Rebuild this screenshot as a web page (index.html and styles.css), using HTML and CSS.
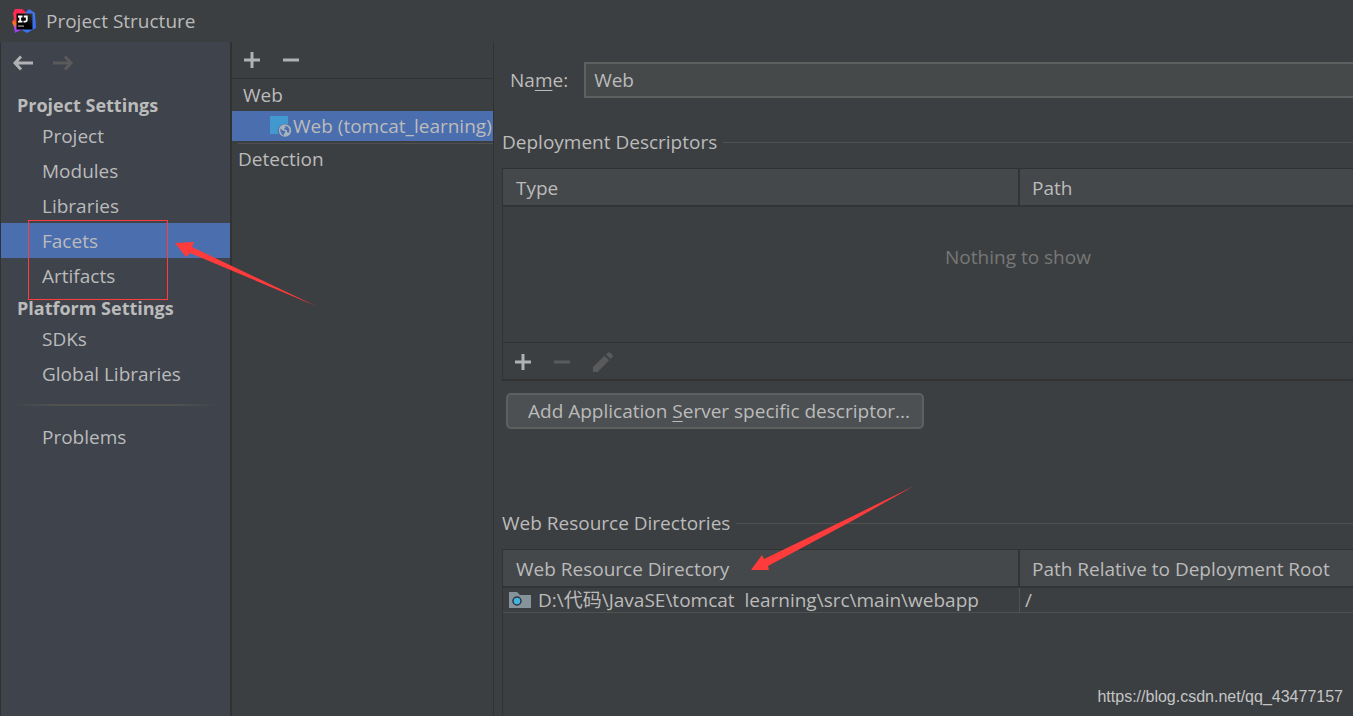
FILE: index.html
```html
<!DOCTYPE html>
<html lang="en">
<head>
<meta charset="utf-8">
<title>Project Structure</title>
<link rel="stylesheet" href="styles.css">
</head>
<body>
<div class="window">
  <header class="titlebar">
    <svg class="logo" width="24" height="24" viewBox="0 0 24 24" aria-hidden="true">
      <defs>
        <linearGradient id="warm" x1="0" y1="0" x2="0" y2="1"><stop offset="0" stop-color="#fe2857"/><stop offset=".45" stop-color="#fc3a4c"/><stop offset=".6" stop-color="#f97a12"/><stop offset=".8" stop-color="#b74af7"/><stop offset="1" stop-color="#8a3bd8"/></linearGradient>
        <linearGradient id="cool" x1="0" y1="0" x2="1" y2="1"><stop offset="0" stop-color="#5a5be0"/><stop offset=".5" stop-color="#3c78ee"/><stop offset="1" stop-color="#2f6bea"/></linearGradient>
        <linearGradient id="plate" x1="1" y1="0" x2="0" y2="1"><stop offset="0" stop-color="#3a3a3a"/><stop offset=".5" stop-color="#000"/></linearGradient>
      </defs>
      <path fill="url(#warm)" d="M3 0 10 0 15 4 14 20 9 21 3 24 2 18 0 13 2 10 1 4z"/>
      <path fill="url(#cool)" d="M17 0 23 4 24 19 15 24 8 20 13 4z"/>
      <path fill="url(#plate)" d="M4.500 4.500h16v16h-16z"/>
      <path fill="none" stroke="#fff" stroke-width="1.800" d="M6 7.500h4.500M8.200 7.500v5M6 12.600h4.500M11.800 7.500h3v3.600q0 1.500-1.500 1.500h-1.800"/>
      <path fill="#aaa" d="M6 16.500h6v1.200H6z"/>
    </svg>
    <h1 class="title">Project Structure</h1>
  </header>

  <div class="panes">
    <nav class="sidebar" aria-label="Settings">
      <div class="history">
        <button class="icon-button" type="button" aria-label="Back">
          <svg width="20" height="16" viewBox="0 0 20 16"><path class="stroke" d="M2 8H20M8 1.500 2 8 8 14.500"/></svg>
        </button>
        <button class="icon-button" type="button" aria-label="Forward" disabled>
          <svg width="20" height="16" viewBox="0 0 20 16"><path class="stroke" d="M18 8H0M12 1.500 18 8 12 14.500"/></svg>
        </button>
      </div>
      <h2 class="group">Project Settings</h2>
      <a class="item" href="#project">Project</a>
      <a class="item" href="#modules">Modules</a>
      <a class="item" href="#libraries">Libraries</a>
      <a class="item selected" href="#facets" aria-current="page">Facets</a>
      <a class="item" href="#artifacts">Artifacts</a>
      <h2 class="group">Platform Settings</h2>
      <a class="item" href="#sdks">SDKs</a>
      <a class="item" href="#global">Global Libraries</a>
      <div class="divider"></div>
      <a class="item" href="#problems">Problems</a>
    </nav>

    <section class="facets" aria-label="Facets">
      <div class="facet-tools">
        <button class="icon-button" type="button" aria-label="Add facet">
          <svg width="16" height="16" viewBox="0 0 16 16"><path class="stroke" d="M8 0V16M0 8H16"/></svg>
        </button>
        <button class="icon-button" type="button" aria-label="Remove facet">
          <svg width="16" height="16" viewBox="0 0 16 16"><path class="stroke" d="M0 8H16"/></svg>
        </button>
      </div>
      <div class="tree-row">Web</div>
      <div class="tree-row child selected">
        <svg class="facet-icon" width="22" height="22" viewBox="0 0 22 22" aria-hidden="true">
          <path fill="#4299cf" d="M0 1h18v8.500a7.200 7.200 0 0 0-9.500 9.500H0z"/>
          <circle cx="15" cy="15.500" r="6.200" fill="#a7b2ba"/>
          <path fill="#4b6eaf" d="M10.500 13.500l2.500 2.200 2.200.3-.2 1.700-1.300 1 .3 2.200-2.400-1.900-1.300-3zM14.500 10.800l3.300 1 1.700 2.700-.6 3.300-1.700-.6-.4-2.200-2.500-.4.300-1.700 1.200-.6z"/>
        </svg>
        <span>Web (tomcat_learning)</span>
      </div>
      <div class="tree-row detection">Detection</div>
    </section>

    <main class="details">
      <div class="name-row">
        <label for="name">Na<u>m</u>e:</label>
        <input id="name" type="text" value="Web">
      </div>

      <h2 class="section">Deployment Descriptors</h2>
      <div class="grid">
        <table>
          <thead><tr><th class="first">Type</th><th>Path</th></tr></thead>
        </table>
        <p class="empty">Nothing to show</p>
        <div class="grid-tools">
          <button class="icon-button" type="button" aria-label="Add descriptor">
            <svg width="16" height="16" viewBox="0 0 16 16"><path class="stroke" d="M8 0V16M0 8H16"/></svg>
          </button>
          <button class="icon-button" type="button" aria-label="Remove descriptor" disabled>
            <svg width="16" height="16" viewBox="0 0 16 16"><path class="stroke" d="M0 8H16"/></svg>
          </button>
          <button class="icon-button" type="button" aria-label="Edit descriptor" disabled>
            <svg width="20" height="20" viewBox="0 0 20 20"><path fill="currentColor" d="M0 15 11.500 3.800 16 8.300 4.800 20H0zM13 2.500 14.500 1q1.500-1.500 3 0L19 2.500q1.500 1.500 0 3L17.500 7z"/></svg>
          </button>
        </div>
      </div>
      <button class="push" type="button">Add Application <u>S</u>erver specific descriptor...</button>

      <h2 class="section resources">Web Resource Directories</h2>
      <div class="grid open">
        <table>
          <thead><tr><th class="first">Web Resource Directory</th><th>Path Relative to Deployment Root</th></tr></thead>
          <tbody><tr>
            <td class="first">
              <div class="path">
                <svg width="22" height="18" viewBox="0 0 22 18" aria-hidden="true">
                  <path fill="#87939a" d="M0 1h8l3 3h11v13H0z"/>
                  <circle cx="8" cy="10" r="4" fill="#40b6e0" stroke="#2c373d" stroke-width="1.500"/>
                </svg>
                <span>D:\代码\JavaSE\tomcat&nbsp; learning\src\main\webapp</span>
              </div>
            </td>
            <td>/</td>
          </tr></tbody>
        </table>
      </div>
    </main>
  </div>

  <div class="mark-box"></div>
  <svg class="mark facets-arrow" width="144" height="68" viewBox="0 0 144 68" aria-hidden="true"><path d="M1 3 20 2 18 7 142 66 16 13 12 17z"/></svg>
  <svg class="mark resource-arrow" width="164" height="86" viewBox="0 0 164 86" aria-hidden="true"><path d="M0 84 11 69 13 73 100 31 163 0 101 35 17 80 18 84z"/></svg>
  <div class="watermark">https://blog.csdn.net/qq_43477157</div>
</div>
</body>
</html>
```
FILE: styles.css
```css
* { box-sizing: border-box; }

body {
  margin: 0;
  background: #3c3f41;
  color: #bbbbbb;
  font: 19px/26px "Open Sans", "Noto Sans CJK SC", sans-serif;
}

h1, h2, p { margin: 0; font-size: inherit; font-weight: normal; }
u { text-underline-offset: 3px; text-decoration-thickness: 1px; }
button, input { font: inherit; color: inherit; }

.window {
  position: relative;
  display: flex;
  flex-direction: column;
  height: 100vh;
  overflow: hidden;
}

.titlebar {
  display: flex;
  align-items: center;
  gap: 10px;
  height: 42px;
  padding-left: 12px;
}
.title { line-height: 28px; }

.panes {
  flex: 1;
  display: grid;
  grid-template-columns: 232px 262px 1fr;
  min-height: 0;
}

.icon-button {
  display: flex;
  padding: 0;
  border: 0;
  background: none;
  color: #afb1b3;
}
.icon-button:disabled { color: #5a5a5a; }
.stroke { fill: none; stroke: currentColor; stroke-width: 3; }

.sidebar {
  background: #3e434c;
  border-left: 1px solid #323232;
  border-right: 2px solid #323232;
}
.history {
  display: flex;
  align-items: center;
  gap: 20px;
  height: 48px;
  padding: 0 12px 6px;
}
.group {
  height: 28px;
  padding-left: 16px;
  font-size: 18px;
  font-weight: bold;
  line-height: 30px;
}
.item {
  display: block;
  height: 35px;
  padding-left: 41px;
  color: inherit;
  line-height: 36px;
  text-decoration: none;
}
.selected { background: #4b6eaf; }
.divider {
  height: 2px;
  margin: 13px 12px;
  background: linear-gradient(90deg, transparent, #515151 20%, #515151 80%, transparent);
}

.facets { border-right: 1px solid #323232; overflow: hidden; }
.facet-tools {
  display: flex;
  align-items: center;
  gap: 23px;
  height: 37px;
  padding-left: 12px;
  border-bottom: 1px solid #323232;
}
.tree-row {
  display: flex;
  align-items: center;
  height: 32px;
  padding-left: 11px;
  white-space: nowrap;
}
.tree-row.child { gap: 1px; height: 30px; padding-left: 38px; }
.facet-icon { flex: none; }
.tree-row.detection {
  height: 30px;
  margin: 2px 0 0 6px;
  padding-left: 0;
  border-top: 1px solid #515151;
}

.details {
  display: flex;
  flex-direction: column;
  min-width: 0;
  padding: 20px 0 0 8px;
}
.name-row { display: flex; align-items: center; gap: 16px; padding-left: 8px; }
.name-row input {
  flex: 1;
  min-width: 0;
  height: 36px;
  padding: 0 8px;
  border: 2px solid #5e6060;
  border-right: 0;
  background: #45494a;
}

.section {
  display: flex;
  align-items: center;
  gap: 6px;
  margin: 31px 0 13px;
}
.section::after { content: ""; flex: 1; height: 1px; background: #515151; }
.section.resources { margin-top: 81px; }

.grid { border: 1px solid #323232; border-right: 0; border-bottom-width: 2px; }
.grid.open { flex: 1; border-bottom: 0; }
table { width: 100%; border-collapse: separate; border-spacing: 0; table-layout: fixed; }
th, td { padding: 0; text-align: left; font-weight: normal; white-space: nowrap; }
th {
  height: 38px;
  padding: 2px 0 0 12px;
  background: #45484a;
  border-bottom: 2px solid #323537;
}
.first { width: 517px; }
th.first { padding-left: 13px; border-right: 2px solid #323537; }
td { height: 25px; padding-left: 5px; line-height: 24px; border-bottom: 1px solid #515151; }
td.first { padding-left: 6px; border-right: 1px solid #515151; }
.path { display: flex; align-items: center; gap: 7px; height: 24px; }
.empty { height: 135px; padding: 37px 0 0 180px; color: #777777; text-align: center; }
.grid-tools {
  display: flex;
  align-items: center;
  gap: 23px;
  height: 37px;
  padding: 2px 0 0 12px;
  border-top: 1px solid #323232;
}

.push {
  align-self: flex-start;
  height: 36px;
  margin: 12px 0 0 4px;
  padding: 0 12px 0 20px;
  border: 2px solid #5e6060;
  border-radius: 5px;
  background: #4c5052;
  white-space: nowrap;
}

.mark-box {
  position: absolute;
  left: 28px;
  top: 220px;
  width: 140px;
  height: 80px;
  border: 1px solid #ff3b3b;
}
.mark { position: absolute; fill: #ff3b3b; }
.facets-arrow { left: 174px; top: 240px; }
.resource-arrow { left: 751px; top: 486px; }

.watermark {
  position: absolute;
  right: 10px;
  bottom: 9px;
  color: #c4c5c6;
  font: 16px/20px "Liberation Sans", Arial, sans-serif;
}
```
